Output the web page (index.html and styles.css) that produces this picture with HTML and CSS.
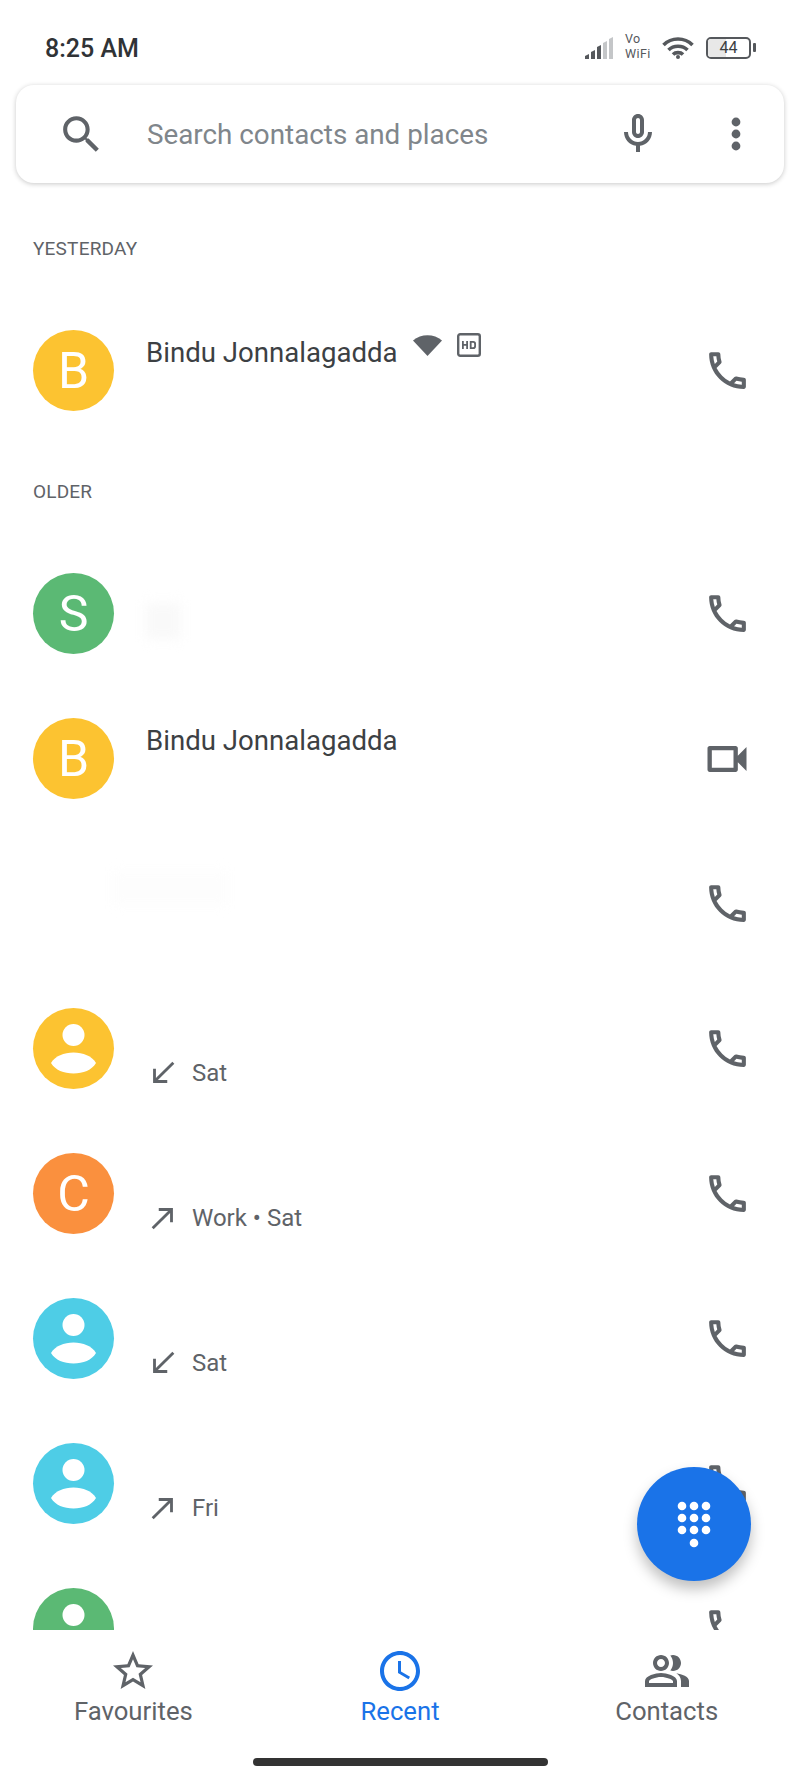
FILE: index.html
```html
<!DOCTYPE html>
<html lang="en">
<head>
  <meta charset="UTF-8" />
  <title>Phone</title>
  <link rel="stylesheet" href="styles.css">
</head>
<body>
  <svg class="defs" width="0" height="0">
    <symbol id="i-call" viewBox="0 0 24 24"><path d="M6.54 5c.06.89.21 1.76.45 2.59l-1.2 1.2c-.41-1.2-.67-2.47-.76-3.79h1.51m9.86 12.02c.85.24 1.72.39 2.6.45v1.49c-1.32-.09-2.59-.35-3.8-.75l1.2-1.19M7.5 3H4c-.55 0-1 .45-1 1 0 9.39 7.61 17 17 17 .55 0 1-.45 1-1v-3.49c0-.55-.45-1-1-1-1.24 0-2.45-.2-3.57-.57-.1-.04-.21-.05-.31-.05-.26 0-.51.1-.71.29l-2.2 2.2c-2.83-1.45-5.15-3.76-6.59-6.59l2.2-2.2c.28-.28.36-.67.25-1.02C8.7 6.45 8.5 5.25 8.5 4c0-.55-.45-1-1-1z"/></symbol>
    <symbol id="i-video" viewBox="0 0 24 24"><path d="M15 8v8H5V8h10m1-2H4c-.55 0-1 .45-1 1v10c0 .55.45 1 1 1h12c.55 0 1-.45 1-1v-3.5l4 4v-11l-4 4V7c0-.55-.45-1-1-1z"/></symbol>
    <symbol id="i-in" viewBox="0 0 24 24"><path d="M20 5.41L18.59 4 7 15.59V9H5v10h10v-2H8.41z"/></symbol>
    <symbol id="i-out" viewBox="0 0 24 24"><path d="M9 5v2h6.59L4 18.59 5.41 20 17 8.41V15h2V5z"/></symbol>
    <symbol id="i-person" viewBox="0 0 81 81"><circle cx="40.5" cy="27" r="11"/><path d="M18 55C22 48 31 44.500 40.500 44.500S59 48 63 55C59 62 50 65.500 40.500 65.500S22 62 18 55Z"/></symbol>
  </svg>

  <div class="phone">
    <!-- status bar -->
    <header class="status">
      <div class="time">8:25 AM</div>
      <div class="status-icons">
        <svg class="signal" width="30" height="22" viewBox="0 0 30 22">
          <path fill="#55585c" d="M0 22v-3l4-2v5zM6 22v-7l4-2v9zM12 22V10l4-2v14z"/>
          <path fill="#c4c6c8" d="M18 22V6l4-2v18zM24 22V2l4-2v22z"/>
        </svg>
        <div class="vowifi"><span>Vo</span><span>WiFi</span></div>
        <svg class="wifi" width="32" height="22" viewBox="0 0 32 22" fill="none" stroke="#55585c" stroke-width="3.600">
          <path d="M1.500 8C9.500 0 22.500 0 30.500 8"/>
          <path d="M6.500 13C11.500 8 20.500 8 25.500 13"/>
          <path d="M11 17.500C13.500 15 18.500 15 21 17.500"/>
          <circle cx="16" cy="20" r="2" fill="#55585c" stroke="none"/>
        </svg>
        <div class="battery"><div class="battery-fill"></div><span class="battery-num">44</span></div>
        <div class="battery-nub"></div>
      </div>
    </header>

    <!-- search -->
    <div class="search">
      <svg class="ic search-ic" viewBox="0 0 24 24"><path d="M15.500 14h-.79l-.28-.27C15.410 12.590 16 11.110 16 9.500 16 5.910 13.090 3 9.500 3S3 5.910 3 9.500 5.910 16 9.500 16c1.610 0 3.090-.59 4.230-1.570l.27.28v.79l5 4.990L20.490 19l-4.990-5zm-6 0C7.010 14 5 11.990 5 9.500S7.010 5 9.500 5 14 7.010 14 9.500 11.990 14 9.500 14z"/></svg>
      <div class="search-text">Search contacts and places</div>
      <svg class="ic mic-ic" viewBox="0 0 24 24"><path d="M12 14c1.660 0 3-1.340 3-3V5c0-1.660-1.340-3-3-3S9 3.340 9 5v6c0 1.660 1.340 3 3 3zm-1-9c0-.55.45-1 1-1s1 .45 1 1v6c0 .55-.45 1-1 1s-1-.45-1-1V5zm6 6c0 2.760-2.240 5-5 5s-5-2.240-5-5H5c0 3.530 2.610 6.430 6 6.920V21h2v-3.080c3.390-.49 6-3.390 6-6.920h-2z"/></svg>
      <svg class="ic dots-ic" viewBox="0 0 24 24"><circle cx="12" cy="6" r="2.200"/><circle cx="12" cy="12" r="2.200"/><circle cx="12" cy="18" r="2.200"/></svg>
    </div>

    <!-- call log -->
    <main class="log">
      <div class="section">YESTERDAY</div>
      <div class="row">
        <div class="avatar yellow">B</div>
        <div class="info">
          <div class="name">Bindu Jonnalagadda
            <svg class="wifi-call" width="29" height="21" viewBox="0 0 29 21"><path d="M0 5.500C8 -1.500 21 -1.500 29 5.500L14.500 21Z"/></svg>
            <svg class="hd" width="24" height="24" viewBox="0 0 24 24"><rect x="1.200" y="1.200" width="21.600" height="21.600" rx="2" fill="none" stroke="#5f6368" stroke-width="2.400"/><path d="M5 8h1.800v3h2.400V8H11v8H9.200v-3.300H6.800V16H5zM12.800 8h3.400a2.800 2.800 0 0 1 2.800 2.800v2.400a2.800 2.800 0 0 1-2.800 2.800h-3.400zm1.800 1.700v4.600h1.400a1.200 1.200 0 0 0 1.200-1.200v-2.200a1.200 1.200 0 0 0-1.200-1.200z"/></svg>
          </div>
          <div class="sub"></div>
        </div>
        <div class="action"><svg class="ic call-ic"><use href="#i-call"/></svg></div>
      </div>

      <div class="section">OLDER</div>
      <div class="row">
        <div class="avatar green">S</div>
        <div class="info"><div class="name"></div><div class="sub"></div></div>
        <div class="smudge smudge-s"></div>
        <div class="action"><svg class="ic call-ic"><use href="#i-call"/></svg></div>
      </div>
      <div class="row">
        <div class="avatar yellow">B</div>
        <div class="info"><div class="name">Bindu Jonnalagadda</div><div class="sub"></div></div>
        <div class="action"><svg class="ic video-ic"><use href="#i-video"/></svg></div>
      </div>
      <div class="row">
        <div class="avatar blank"></div>
        <div class="info"><div class="name"></div><div class="sub"></div></div>
        <div class="smudge smudge-wide"></div>
        <div class="action"><svg class="ic call-ic"><use href="#i-call"/></svg></div>
      </div>
      <div class="row">
        <div class="avatar yellow"><svg class="person"><use href="#i-person"/></svg></div>
        <div class="info"><div class="name"></div><div class="sub"><svg class="ic dir-ic"><use href="#i-in"/></svg>Sat</div></div>
        <div class="action"><svg class="ic call-ic"><use href="#i-call"/></svg></div>
      </div>
      <div class="row">
        <div class="avatar orange">C</div>
        <div class="info"><div class="name"></div><div class="sub"><svg class="ic dir-ic"><use href="#i-out"/></svg>Work • Sat</div></div>
        <div class="action"><svg class="ic call-ic"><use href="#i-call"/></svg></div>
      </div>
      <div class="row">
        <div class="avatar cyan"><svg class="person"><use href="#i-person"/></svg></div>
        <div class="info"><div class="name"></div><div class="sub"><svg class="ic dir-ic"><use href="#i-in"/></svg>Sat</div></div>
        <div class="action"><svg class="ic call-ic"><use href="#i-call"/></svg></div>
      </div>
      <div class="row">
        <div class="avatar cyan"><svg class="person"><use href="#i-person"/></svg></div>
        <div class="info"><div class="name"></div><div class="sub"><svg class="ic dir-ic"><use href="#i-out"/></svg>Fri</div></div>
        <div class="action"><svg class="ic call-ic"><use href="#i-call"/></svg></div>
      </div>
      <div class="row">
        <div class="avatar green"><svg class="person"><use href="#i-person"/></svg></div>
        <div class="info"><div class="name"></div><div class="sub"></div></div>
        <div class="action"><svg class="ic call-ic"><use href="#i-call"/></svg></div>
      </div>
    </main>

    <!-- dialpad button -->
    <div class="fab">
      <svg width="38" height="50" viewBox="0 0 38 50" fill="#fff">
        <circle cx="7" cy="7" r="4.300"/><circle cx="19" cy="7" r="4.300"/><circle cx="31" cy="7" r="4.300"/>
        <circle cx="7" cy="19" r="4.300"/><circle cx="19" cy="19" r="4.300"/><circle cx="31" cy="19" r="4.300"/>
        <circle cx="7" cy="31" r="4.300"/><circle cx="19" cy="31" r="4.300"/><circle cx="31" cy="31" r="4.300"/>
        <circle cx="19" cy="44" r="4.300"/>
      </svg>
    </div>

    <!-- bottom nav -->
    <nav class="nav">
      <div class="tabs">
        <div class="tab">
          <svg class="ic" viewBox="0 0 24 24"><path d="M22 9.240l-7.190-.62L12 2 9.190 8.630 2 9.240l5.460 4.730L5.820 21 12 17.270 18.180 21l-1.630-7.030L22 9.240zM12 15.400l-3.760 2.270 1-4.280-3.320-2.880 4.380-.38L12 6.100l1.710 4.040 4.380.38-3.320 2.880 1 4.280L12 15.400z"/></svg>
          <span>Favourites</span>
        </div>
        <div class="tab active">
          <svg class="ic" viewBox="0 0 24 24"><path d="M11.990 2C6.470 2 2 6.480 2 12s4.470 10 9.990 10C17.520 22 22 17.520 22 12S17.520 2 11.990 2zM12 20c-4.420 0-8-3.580-8-8s3.580-8 8-8 8 3.580 8 8-3.580 8-8 8zm.5-13H11v6l5.250 3.150.75-1.230-4.500-2.670z"/></svg>
          <span>Recent</span>
        </div>
        <div class="tab">
          <svg class="ic" viewBox="0 0 24 24"><path d="M16.670 13.130C18.040 14.060 19 15.320 19 17v3h4v-3c0-2.180-3.570-3.470-6.330-3.870z"/><path d="M15 12c2.210 0 4-1.790 4-4s-1.790-4-4-4c-.47 0-.91.1-1.330.24C14.500 5.270 15 6.580 15 8s-.5 2.730-1.330 3.760c.42.14.86.24 1.330.24z"/><path d="M9 12c2.210 0 4-1.790 4-4s-1.790-4-4-4-4 1.790-4 4 1.790 4 4 4zm0-6c1.100 0 2 .9 2 2s-.9 2-2 2-2-.9-2-2 .9-2 2-2z"/><path d="M9 13c-2.670 0-8 1.340-8 4v3h16v-3c0-2.660-5.330-4-8-4zm6 5H3v-.99C3.200 16.290 6.300 15 9 15s5.800 1.290 6 2z"/></svg>
          <span>Contacts</span>
        </div>
      </div>
      <div class="home-bar"></div>
    </nav>
  </div>
</body>
</html>
```

FILE: styles.css
```css
:root{--grey:#5f6368;--text:#3c4043;--blue:#1a73e8}
*{box-sizing:border-box;margin:0;padding:0}
html,body{height:100%;overflow:hidden}
body{font-family:Roboto,sans-serif;background:#fff;color:var(--text)}
.defs{position:absolute}
.phone{position:relative;height:100vh;display:flex;flex-direction:column}
.ic{display:block;fill:var(--grey);flex:none}

/* status bar */
.status{height:85px;flex:none;display:flex;align-items:center;justify-content:space-between;padding:10px 44px 0 45px}
.time{font-size:25px;font-weight:500;color:#303336;margin-top:1px}
.status-icons{display:flex;align-items:center}
.signal{margin-right:10px}
.vowifi{display:flex;flex-direction:column;font-size:12.500px;line-height:14.700px;letter-spacing:.4px;color:#55585c;width:28px;margin:-2px 9px 0 0}
.wifi{margin-right:12px}
.battery{position:relative;width:45px;height:22px;border:2.500px solid #55585c;border-radius:5px;overflow:hidden;display:flex;align-items:center;justify-content:center}
.battery-fill{position:absolute;left:0;top:0;bottom:0;width:44%;background:#e8e8e8}
.battery-num{position:relative;font-size:16px;color:#3c4043}
.battery-nub{width:3px;height:9px;background:#55585c;margin-left:2px;border-radius:1px}

/* search */
.search{height:98px;flex:none;margin:0 16px 17px;display:flex;align-items:center;background:#fff;border-radius:18px;box-shadow:0 1px 5px rgba(0,0,0,.22);padding:0 24px 0 41px}
.search-ic{width:49px;height:49px;margin-right:41px}
.search-text{flex:1;font-size:27.800px;color:#80868b}
.mic-ic{width:48px;height:48px;margin-right:50px}
.dots-ic{width:48px;height:48px}

/* log */
.log{flex:1;min-height:0;overflow:hidden}
.section{height:98px;padding:0 0 2px 33px;display:flex;align-items:center;font-size:19px;letter-spacing:.2px;color:var(--grey)}
.row{position:relative;height:145px;display:flex;align-items:center;padding-left:33px}
.avatar{width:81px;height:81px;border-radius:50%;flex:none;margin-right:32px;display:flex;align-items:center;justify-content:center;color:#fff;font-size:50px;overflow:hidden}
.avatar.blank{background:none}
.yellow{background:#fcc331}
.green{background:#5bb974}
.orange{background:#fa903e}
.cyan{background:#4ecde6}
.person{width:81px;height:81px;fill:#fff}
.info{flex:1;padding-top:6px}
.name{height:42px;display:flex;align-items:center;font-size:27.600px;color:var(--text)}
.wifi-call{fill:var(--grey);align-self:flex-start;margin:3px 0 0 15px}
.hd{fill:var(--grey);align-self:flex-start;margin:1px 0 0 15px}
.sub{height:42px;display:flex;align-items:center;gap:12px;font-size:24px;color:var(--grey)}
.dir-ic{width:34px;height:34px}
.action{width:80px;height:80px;margin-right:33px;display:flex;align-items:center;justify-content:center;flex:none}
.call-ic{width:49px;height:49px}
.video-ic{width:52px;height:52px}
/* blurred out bits of the list */
.smudge{position:absolute;filter:blur(6px)}
.smudge-s{left:145px;top:62px;width:36px;height:36px;background:#f9f9f9}
.smudge-wide{left:112px;top:40px;width:116px;height:34px;background:#fdfdfd}

/* dialpad */
.fab{position:absolute;left:637px;top:1467px;width:114px;height:114px;border-radius:50%;background:var(--blue);display:flex;align-items:center;justify-content:center;box-shadow:0 8px 14px rgba(0,0,0,.25)}

/* bottom nav */
.nav{height:147px;flex:none;background:#fff;position:relative;display:flex;flex-direction:column;align-items:center}
.tabs{width:100%;flex:1;display:flex}
.tab{flex:1;display:flex;flex-direction:column;align-items:center;padding-top:17px;font-size:25.700px;color:var(--grey)}
.tab .ic{width:48px;height:48px}
.tab span{line-height:30px;margin-top:1px}
.tab.active{color:var(--blue)}
.tab.active .ic{fill:var(--blue)}
.home-bar{width:295px;height:8px;border-radius:4px;background:#333;margin-bottom:11px}
```
